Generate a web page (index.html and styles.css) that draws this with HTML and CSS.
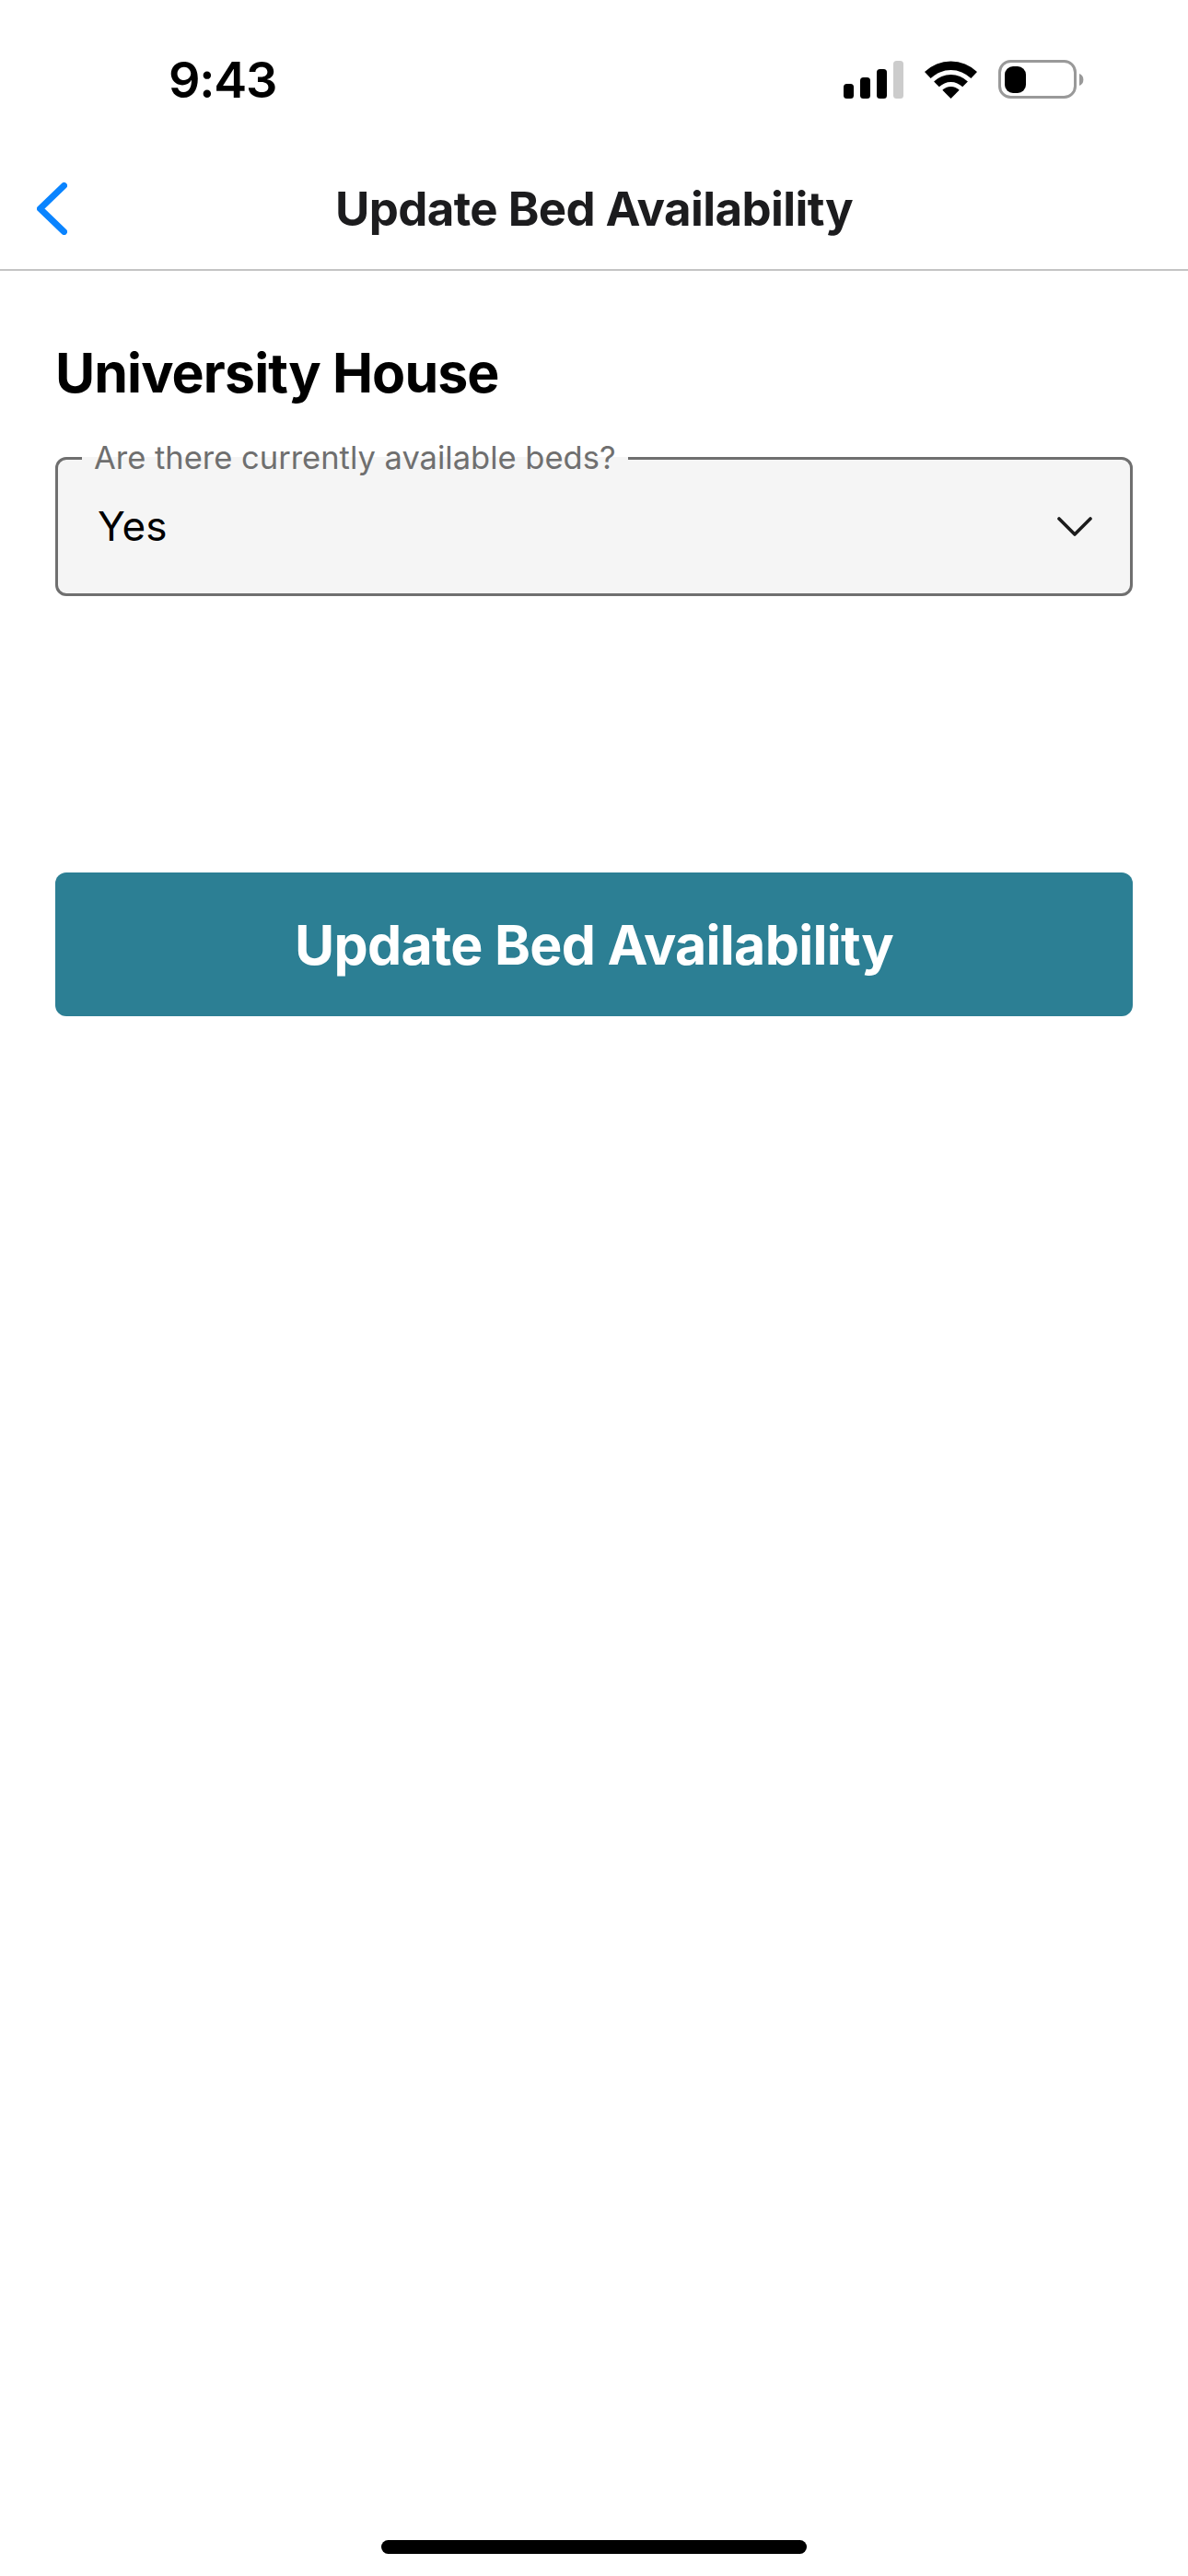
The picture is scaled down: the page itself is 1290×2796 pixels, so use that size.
FILE: index.html
```html
<!DOCTYPE html>
<html lang="en">
<head>
<meta charset="utf-8">
<title>Update Bed Availability</title>
<link rel="stylesheet" href="styles.css">
</head>
<body>
<div class="screen">
  <header class="status-bar">
    <span class="clock">9:43</span>
    <svg class="status-icons" width="262" height="42" viewBox="0 0 262 42" aria-hidden="true">
      <!-- signal bars -->
      <rect x="0" y="26" width="11" height="16" rx="3.5" fill="#000"/>
      <rect x="18" y="19" width="11" height="23" rx="3.5" fill="#000"/>
      <rect x="36" y="10" width="11" height="32" rx="3.5" fill="#000"/>
      <rect x="54" y="1" width="11" height="41" rx="3.5" fill="#ccc"/>
      <!-- wifi -->
      <g transform="translate(88 1)" fill="#000">
        <path d="M0 12A41 41 0 0 1 57 12L50.4 19.1A31 31 0 0 0 6.6 19.1Z"/>
        <path d="M10.1 22.6A26 26 0 0 1 46.9 22.6L41.2 28.3A18 18 0 0 0 15.8 28.3Z"/>
        <path d="M19.3 31.8A13 13 0 0 1 37.7 31.8L28.5 41Z"/>
      </g>
      <!-- battery -->
      <rect x="169.5" y="1.5" width="82" height="39" rx="12" fill="none" stroke="#999" stroke-width="3"/>
      <rect x="175" y="7" width="23" height="29" rx="9" fill="#000"/>
      <path d="M256 15A7 7 0 0 1 256 28Z" fill="#999"/>
    </svg>
  </header>

  <nav class="nav-bar">
    <svg class="back-icon" width="33" height="57" viewBox="0 0 33 57" aria-hidden="true">
      <polyline points="29.5,3.5 3.5,28.5 29.5,53.5" fill="none" stroke="#0a84ff" stroke-width="7" stroke-linecap="round" stroke-linejoin="round"/>
    </svg>
    <h1 class="nav-title">Update Bed Availability</h1>
  </nav>

  <main class="content">
    <h2 class="facility">University House</h2>
    <fieldset class="select-field">
      <legend class="select-label">Are there currently available beds?</legend>
      <div class="select-row">
        <span class="select-value">Yes</span>
        <svg class="select-caret" width="38" height="21" viewBox="0 0 38 21" aria-hidden="true">
          <polyline points="2,2 19,19 36,2" fill="none" stroke="#1c1c1c" stroke-width="3.6" stroke-linecap="round" stroke-linejoin="round"/>
        </svg>
      </div>
    </fieldset>
    <button class="submit" type="button">Update Bed Availability</button>
  </main>

  <div class="home-indicator"></div>
</div>
</body>
</html>
```

FILE: styles.css
```css
* {
  box-sizing: border-box;
}

html,
body {
  margin: 0;
  padding: 0;
  background: #fff;
}

body {
  font-family: Inter, "Liberation Sans", sans-serif;
}

.screen {
  width: 1290px;
  height: 2796px;
  display: flex;
  flex-direction: column;
  overflow: hidden;
}

.status-bar {
  height: 160px;
  flex: none;
  display: flex;
  justify-content: space-between;
  align-items: flex-start;
  padding: 56px 112px 0 183px;
}

.clock {
  font-size: 54px;
  line-height: 62px;
  font-weight: 600;
  letter-spacing: -1.2px;
  color: #000;
}

.status-icons {
  display: block;
  margin-top: 9px;
}

.nav-bar {
  height: 134px;
  flex: none;
  display: flex;
  align-items: center;
  justify-content: center;
  border-bottom: 2px solid #c4c4c4;
  position: relative;
}

.back-icon {
  position: absolute;
  left: 40px;
  top: 38px;
}

.nav-title {
  margin: 1px 0 0;
  font-size: 51px;
  line-height: 60px;
  font-weight: 700;
  letter-spacing: -0.6px;
  color: #1c1c1e;
}

.content {
  display: flex;
  flex-direction: column;
  padding: 0 60px;
}

.facility {
  margin: 75px 0 0;
  font-size: 59px;
  line-height: 72px;
  font-weight: 700;
  color: #000;
  letter-spacing: -0.9px;
}

.select-field {
  margin: 36px 0 0;
  padding: 0;
  height: 170px;
  border: 3px solid #6f6f6f;
  border-radius: 12px;
  background: #f5f5f5;
  min-width: 0;
}

.select-label {
  margin-left: 26px;
  padding: 0 13px;
  font-size: 34.5px;
  line-height: 40px;
  font-weight: 400;
  color: #6f6f6f;
}

.select-row {
  height: 108px;
  padding: 0 41px 0 43px;
  display: flex;
  align-items: center;
  justify-content: space-between;
}

.select-value {
  font-size: 44px;
  line-height: 56px;
  color: #000;
}

.select-caret {
  display: block;
}

.submit {
  margin-top: 300px;
  height: 156px;
  border: 0;
  border-radius: 12px;
  background: #2c7f94;
  color: #fff;
  font-family: inherit;
  font-size: 59px;
  font-weight: 700;
  letter-spacing: -0.7px;
}

.home-indicator {
  width: 462px;
  height: 15px;
  flex: none;
  margin: auto auto 24px;
  border-radius: 8px;
  background: #000;
}
```
